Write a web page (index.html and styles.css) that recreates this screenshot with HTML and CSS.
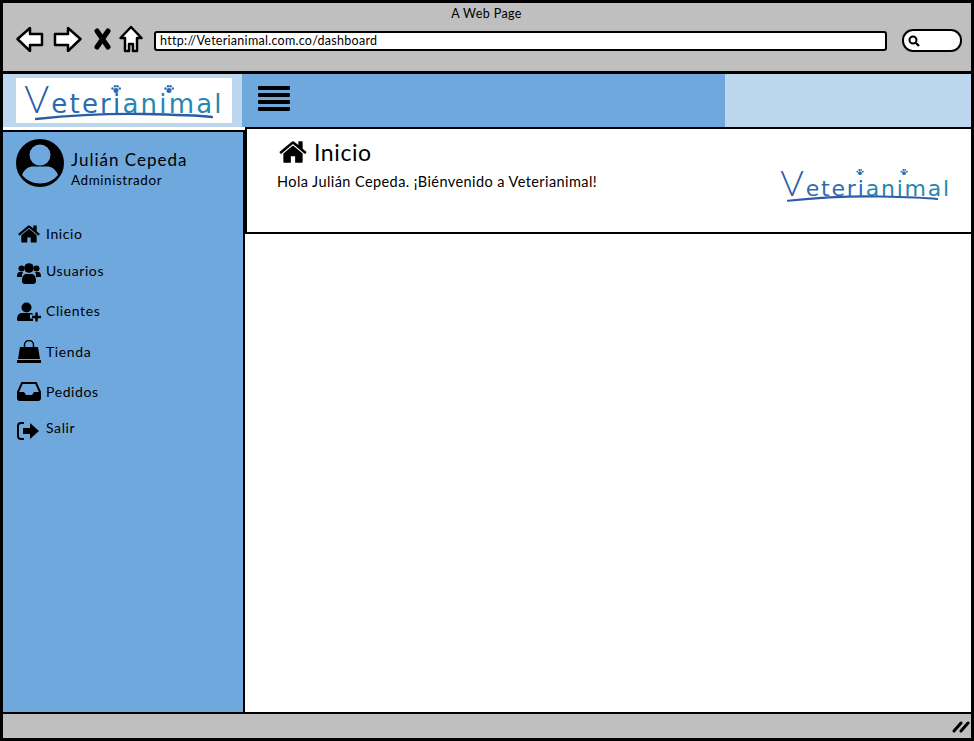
FILE: index.html
```html
<!DOCTYPE html>
<html lang="en">
<head>
<meta charset="UTF-8" />
<title>Veterianimal dashboard</title>
<link rel="stylesheet" href="styles.css">
</head>
<body>
<svg class="defs" width="0" height="0">
  <symbol id="i-home" viewBox="0 0 1792 1792"><path d="M1472 992v480q0 26-19 45t-45 19h-384v-384h-256v384h-384q-26 0-45-19t-19-45v-480q0-1 .5-3t.5-3l575-474 575 474q1 2 1 6zm223-69l-62 74q-8 9-21 11h-3q-13 0-21-7l-692-577-692 577q-12 8-24 7-13-2-21-11l-62-74q-8-10-7-23.500t11-21.500l719-599q32-26 76-26t76 26l244 204v-195q0-14 9-23t23-9h192q14 0 23 9t9 23v408l219 182q10 8 11 21.500t-7 23.500z"/></symbol>
  <symbol id="i-logo-line" viewBox="0 0 180 10"><path d="M1 8Q60 2 110 3T179 6" fill="none" stroke="#2b5ca8" stroke-width="2.500" stroke-linecap="round"/></symbol>
  <symbol id="i-paw" viewBox="0 0 10 8"><circle cx="5" cy="5.500" r="2.500"/><circle cx="1.500" cy="3.500" r="1.200"/><circle cx="4" cy="1.300" r="1.200"/><circle cx="6.500" cy="1.300" r="1.200"/><circle cx="8.800" cy="3.500" r="1.200"/></symbol>
</svg>

<div class="window">
  <div class="toolbar">
    <div class="page-title">A Web Page</div>
    <div class="nav-row">
      <svg class="nav-icon" width="28" height="26" viewBox="0 0 28 26"><path d="M1.500 13L14 2v6h12v11H14v6z" fill="#fff" stroke="#000" stroke-width="2.500" stroke-linejoin="round"/></svg>
      <svg class="nav-icon" width="29" height="26" viewBox="0 0 29 26"><path d="M27.500 13L15 2v6H2v11h13v6z" fill="#fff" stroke="#000" stroke-width="2.500" stroke-linejoin="round"/></svg>
      <svg class="nav-icon stop" width="17" height="22" viewBox="0 0 17 22"><path d="M3 3l11 16M14 3L3 19" fill="none" stroke="#000" stroke-width="5" stroke-linecap="round"/></svg>
      <svg class="nav-icon" width="24" height="28" viewBox="0 0 24 28"><path d="M12 2L22.500 13H18V26H14V19H10V26H6V13H1.500z" fill="#fff" stroke="#000" stroke-width="2.500" stroke-linejoin="round"/></svg>
      <div class="url-bar">http://Veterianimal.com.co/dashboard</div>
      <div class="search-box">
        <svg width="12" height="12" viewBox="0 0 12 12"><circle cx="5" cy="5" r="3.500" fill="none" stroke="#000" stroke-width="2"/><path d="M8 8l3 3" stroke="#000" stroke-width="2.400"/></svg>
      </div>
    </div>
  </div>

  <header class="app-header">
    <div class="brand-col">
      <div class="logo-box">
        <div class="logo"><span class="logo-v">V</span>eteri<span class="logo-tail">animal</span>
          <svg class="paw paw-a"><use href="#i-paw"/></svg>
          <svg class="paw paw-b"><use href="#i-paw"/></svg>
          <svg class="logo-line"><use href="#i-logo-line"/></svg>
        </div>
      </div>
    </div>
    <div class="bar-col">
      <div class="hamburger"><i></i><i></i><i></i><i></i></div>
    </div>
    <div class="end-col"></div>
  </header>

  <div class="app-body">
    <aside class="sidebar">
      <div class="profile">
        <svg width="48" height="48" viewBox="0 0 48 48">
          <circle cx="24" cy="24" r="24"/>
          <circle cx="24" cy="16" r="10.500" fill="#6fa8dc"/>
          <path d="M6 36c2-6 7-8.500 11-8.500h14c4 0 9 2.500 11 8.500-4 5-11 8.500-18 8.500S10 41 6 36z" fill="#6fa8dc"/>
        </svg>
        <div class="profile-text">
          <div class="profile-name">Julián Cepeda</div>
          <div class="profile-role">Administrador</div>
        </div>
      </div>

      <nav class="menu">
        <a class="menu-item"><svg height="24"><use href="#i-home"/></svg><span>Inicio</span></a>
        <a class="menu-item up">
          <svg height="23" viewBox="0 0 24 23"><circle cx="4.500" cy="6.500" r="3"/><circle cx="19.500" cy="6.500" r="3"/><circle cx="12" cy="6" r="4.800"/><path d="M0 15c0-4 1-5 3-5h3c-1 2-1 3-1 5zM24 15c0-4-1-5-3-5h-3c1 2 1 3 1 5zM5 19c0-5 2-7 4-7h6c2 0 4 2 4 7 0 2-1 3-3 3H8c-2 0-3-1-3-3z"/></svg>
          <span>Usuarios</span></a>
        <a class="menu-item slight">
          <svg height="20" viewBox="0 0 24 20"><circle cx="9.500" cy="5.500" r="5"/><path d="M0 18c0-5 2-7 5-7h9c1 0 2 .5 2.500 1.500H13v4h3V19H2c-1 0-2-.5-2-1z"/><path d="M15 15h9M19.500 10.500v9" stroke="#000" stroke-width="2.500" fill="none"/></svg>
          <span>Clientes</span></a>
        <a class="menu-item">
          <svg height="24" viewBox="0 0 24 24"><path d="M3 7h18l2 12H1z"/><path d="M0 20h24v3H0z"/><path d="M7.500 10V5a4.500 4.500 0 0 1 9 0v5" fill="none" stroke="#000" stroke-width="1.500"/></svg>
          <span>Tienda</span></a>
        <a class="menu-item">
          <svg height="19" viewBox="0 0 24 19"><path d="M5 1h14l4 9v6a2 2 0 0 1-2 2H3a2 2 0 0 1-2-2v-6z" fill="none" stroke="#000" stroke-width="2"/><path d="M1 10h6l2 3h6l2-3h6v6a2 2 0 0 1-2 2H3a2 2 0 0 1-2-2z"/></svg>
          <span>Pedidos</span></a>
        <a class="menu-item up">
          <svg height="20" viewBox="0 0 24 20"><path d="M7 2H4a3 3 0 0 0-3 3v10a3 3 0 0 0 3 3h3" fill="none" stroke="#000" stroke-width="2"/><path d="M6 7h7V2l9 8-9 8v-5H6z"/></svg>
          <span>Salir</span></a>
      </nav>
    </aside>

    <main class="content">
      <section class="page-head">
        <div>
          <h1 class="page-heading"><svg width="30" height="30"><use href="#i-home"/></svg>Inicio</h1>
          <p class="greeting">Hola Julián Cepeda. ¡Biénvenido a Veterianimal!</p>
        </div>
        <div class="logo logo-small"><span class="logo-v">V</span>eteri<span class="logo-tail">animal</span>
          <svg class="paw paw-a"><use href="#i-paw"/></svg>
          <svg class="paw paw-b"><use href="#i-paw"/></svg>
          <svg class="logo-line"><use href="#i-logo-line"/></svg>
        </div>
      </section>
    </main>
  </div>

  <footer class="statusbar">
    <svg width="18" height="14" viewBox="0 0 18 14"><path d="M2 12l7-8M9 12l7-8" stroke="#000" stroke-width="3" stroke-linecap="round"/></svg>
  </footer>
</div>
</body>
</html>
```

FILE: styles.css
```css
html, body {
  margin: 0;
  height: 100%;
  overflow: hidden;
  background: #fff;
  color: #000;
  font-family: 'Lato', 'Noto Sans', sans-serif;
}

.defs {
  display: block;
  height: 0;
}

.window {
  box-sizing: border-box;
  width: 974px;
  height: 741px;
  border: 3px solid #000;
  display: flex;
  flex-direction: column;
}

/* browser chrome */
.toolbar {
  height: 71px;
  flex: none;
  box-sizing: border-box;
  background: #bfbfbf;
  border-bottom: 3px solid #000;
  padding: 4px 9px 0 13px;
}

.page-title {
  text-align: center;
  font-size: 12.500px;
  letter-spacing: 0.4px;
  line-height: 14px;
  margin: 0 5px 3px 0;
}

.nav-row {
  display: flex;
  align-items: center;
  height: 30px;
}

.nav-icon {
  margin-right: 9px;
  flex: none;
}

.stop {
  margin: 0 8px 0 3px;
}

.url-bar {
  box-sizing: border-box;
  width: 733px;
  height: 20px;
  margin: 4px 15px 0 2px;
  padding-left: 4px;
  background: #fff;
  border: 2px solid #000;
  border-radius: 3px;
  font-size: 12.500px;
  letter-spacing: 0.28px;
  line-height: 16px;
}

.search-box {
  box-sizing: border-box;
  width: 60px;
  height: 23px;
  margin-top: 3px;
  padding-left: 4px;
  background: #fff;
  border: 2px solid #000;
  border-radius: 11px;
  display: flex;
  align-items: center;
}

/* app header */
.app-header {
  height: 53px;
  flex: none;
  display: flex;
}

.brand-col {
  width: 239px;
  background: #bdd7ee;
  padding: 4px 0 0 13px;
  box-sizing: border-box;
}

.logo-box {
  width: 216px;
  height: 45px;
  background: #fff;
  display: flex;
  align-items: center;
  justify-content: center;
}

.bar-col {
  width: 483px;
  background: #6fa8dc;
  padding: 12px 0 0 16px;
  box-sizing: border-box;
}

.end-col {
  flex: 1;
  background: #bdd7ee;
}

.hamburger {
  width: 32px;
  display: flex;
  flex-direction: column;
  gap: 3px;
}

.hamburger i {
  display: block;
  height: 4px;
  background: #000;
  border-radius: 1px;
}

/* same logo in two sizes */
.logo {
  position: relative;
  color: #2b6cb0;
  font-family: 'DejaVu Sans', sans-serif;
  font-size: 26px;
  letter-spacing: 2.200px;
  line-height: 38px;
  white-space: nowrap;
}

.logo-tail {
  color: #2488b0;
}

.logo-v {
  color: #2b5ca8;
  font-size: 38px;
  font-family: 'Lato', sans-serif;
  font-weight: 300;
}

.paw {
  position: absolute;
  top: 6px;
  width: 10px;
  height: 8px;
  fill: #2b6cb0;
}

.paw-a {
  left: 87px;
}

.paw-b {
  left: 140px;
}

.logo-line {
  position: absolute;
  left: 11px;
  bottom: 2px;
  width: 178px;
  height: 10px;
}

.logo-small {
  align-self: flex-start;
  font-size: 22px;
  letter-spacing: 1.800px;
  line-height: 34px;
  margin: 28px 20px 0 0;
}

.logo-small .logo-v {
  font-size: 36px;
}

.logo-small .paw {
  top: 4px;
  width: 8px;
  height: 6px;
}

.logo-small .paw-a {
  left: 76px;
}

.logo-small .paw-b {
  left: 120px;
}

.logo-small .logo-line {
  left: 7px;
  width: 151px;
  height: 8.400px;
  bottom: 4px;
}

/* sidebar + content */
.app-body {
  flex: 1;
  display: flex;
  min-height: 0;
}

.sidebar {
  width: 242px;
  flex: none;
  box-sizing: border-box;
  margin-top: 3px;
  background: #6fa8dc;
  border-top: 2px solid #000;
  border-right: 2px solid #000;
  padding: 7px 0 0 13px;
}

.profile {
  display: flex;
  align-items: flex-start;
  gap: 7px;
  color: #000;
}

.profile-text {
  padding-top: 10px;
}

.profile-name {
  font-size: 17px;
  letter-spacing: 1px;
  line-height: 22px;
}

.profile-role {
  font-size: 13.500px;
  letter-spacing: 0.55px;
  line-height: 17px;
  margin-top: 1px;
}

.menu {
  display: flex;
  flex-direction: column;
  margin: 25px 0 0 1px;
}

.menu-item {
  height: 39.400px;
  display: flex;
  align-items: center;
  font-size: 14px;
  letter-spacing: 0.6px;
}

.menu-item svg {
  width: 24px;
  flex: none;
  margin-right: 5px;
}

.menu-item.up span {
  padding-bottom: 6px;
}

.menu-item.slight span {
  padding-bottom: 3px;
}

.content {
  flex: 1;
  min-width: 0;
  background: #fff;
}

.page-head {
  box-sizing: border-box;
  height: 107px;
  display: flex;
  justify-content: space-between;
  border-top: 2px solid #000;
  border-bottom: 2px solid #000;
  border-left: 2px solid #000;
  padding: 8px 0 0 30px;
}

.page-heading {
  display: flex;
  align-items: center;
  gap: 6px;
  margin: 0 0 0 1px;
  font-size: 23px;
  font-weight: 400;
  letter-spacing: 0.6px;
  line-height: 30px;
}

.greeting {
  margin: 6px 0 0;
  font-size: 14.500px;
  letter-spacing: 0.42px;
  line-height: 18px;
}

.statusbar {
  height: 26px;
  flex: none;
  box-sizing: border-box;
  background: #bfbfbf;
  border-top: 2px solid #000;
  display: flex;
  justify-content: flex-end;
  align-items: center;
  padding-right: 1px;
}
```
